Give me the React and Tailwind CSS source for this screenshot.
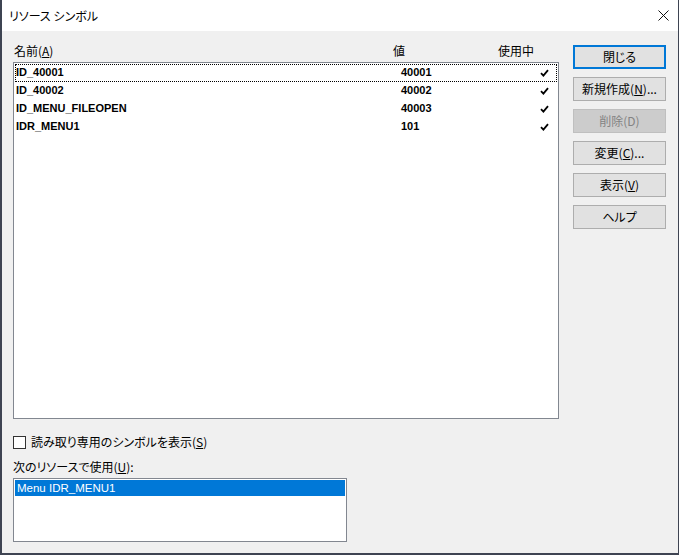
const jp = '"Noto Sans CJK JP", "Liberation Sans", sans-serif';

const rows = [
  { name: 'ID_40001', value: '40001', focused: true },
  { name: 'ID_40002', value: '40002' },
  { name: 'ID_MENU_FILEOPEN', value: '40003' },
  { name: 'IDR_MENU1', value: '101' },
];

function Check() {
  return (
    <svg width="9" height="8" viewBox="0 0 9 8" className="block mt-[4px]">
      <path d="M1 4.2 L3.4 6.6 L8 1.2" fill="none" stroke="#000" strokeWidth="1.8" />
    </svg>
  );
}

function Button({ children, variant }) {
  const base = 'w-[93px] h-[24px] flex items-center justify-center text-[12px] leading-none [font-feature-settings:"palt"]';
  const cls =
    variant === 'default'
      ? 'border-2 border-[#0078d7] bg-[#e1e1e1] text-black'
      : variant === 'disabled'
        ? 'border border-[#bfbfbf] bg-[#cccccc] text-[#838383]'
        : 'border border-[#adadad] bg-[#e1e1e1] text-black';
  return (
    <div className={`${base} ${cls}`} style={{ fontFamily: jp }}>
      {children}
    </div>
  );
}

export default function App() {
  return (
    <div className="w-[679px] h-[555px] flex flex-col bg-[#f0f0f0] border-l-2 border-r border-b-2 border-[#3e4452] overflow-hidden select-none">
      <div className="h-[31px] bg-white flex items-center justify-between pl-[7px] pr-[9px] shrink-0">
        <span className="text-[12px] text-black [font-feature-settings:'palt']" style={{ fontFamily: jp }}>
          リソース シンボル
        </span>
        <svg width="11" height="11" viewBox="0 0 11 11">
          <path d="M0.5 0.5 L10.5 10.5 M10.5 0.5 L0.5 10.5" stroke="#111" strokeWidth="1" />
        </svg>
      </div>

      <div className="flex pl-[11px] pt-[13px] gap-[14px]" style={{ fontFamily: jp }}>
        <div className="w-[546px] flex flex-col">
          <div className="h-[18px] relative text-[12px] leading-[14px] text-black [font-feature-settings:'palt']">
            <span className="absolute left-[1px] top-0">
              名前(<span className="underline">A</span>)
            </span>
            <span className="absolute left-[380px] top-0">値</span>
            <span className="absolute left-[485px] top-0">使用中</span>
          </div>
          <div className="h-[357px] border border-[#828790] bg-white p-[1px]">
            {rows.map((r) => (
              <div
                key={r.name}
                className={`h-[18px] flex items-start text-[11px] leading-[14px] font-bold text-black ${r.focused ? 'border border-dotted border-black' : 'border border-transparent'}`}
                style={{ fontFamily: '"Liberation Sans", Arial, sans-serif' }}
              >
                <span className="w-[385px] shrink-0">{r.name}</span>
                <span className="w-[139px] shrink-0">{r.value}</span>
                <Check />
              </div>
            ))}
          </div>

          <div className="flex items-center mt-[16px] h-[14px] gap-[5px]">
            <div className="w-[13px] h-[13px] border border-[#333] bg-white shrink-0" />
            <span className="text-[12px] text-black leading-none [font-feature-settings:'palt']">
              読み取り専用のシンボルを表示(<span className="underline">S</span>)
            </span>
          </div>

          <div className="mt-[11px] text-[12px] leading-[14px] text-black [font-feature-settings:'palt']">
            次のリソースで使用(<span className="underline">U</span>):
          </div>
          <div className="mt-[4px] w-[334px] h-[64px] border border-[#828790] bg-white p-[1px]">
            <div
              className="h-[16px] bg-[#0078d7] text-white text-[11.5px] leading-[16px] pl-[2px]"
              style={{ fontFamily: '"Liberation Sans", Arial, sans-serif' }}
            >
              Menu IDR_MENU1
            </div>
          </div>
        </div>

        <div className="flex flex-col gap-[8px] pt-[1px]">
          <Button variant="default">閉じる</Button>
          <Button>
            新規作成(<span className="underline">N</span>)...
          </Button>
          <Button variant="disabled">削除(D)</Button>
          <Button>
            変更(<span className="underline">C</span>)...
          </Button>
          <Button>
            表示(<span className="underline">V</span>)
          </Button>
          <Button>ヘルプ</Button>
        </div>
      </div>
    </div>
  );
}
